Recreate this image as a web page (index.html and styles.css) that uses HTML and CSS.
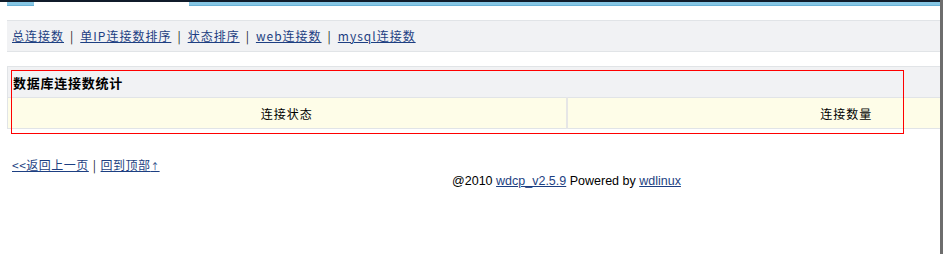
FILE: index.html
```html
<!DOCTYPE html>
<html lang="zh-CN">
<head>
  <meta charset="UTF-8" />
  <title>数据库连接数统计</title>
  <link rel="stylesheet" href="styles.css">
</head>
<body>
  <div class="page">
    <div class="topbar">
      <span class="tab tab-left"></span>
      <span class="tab-gap"></span>
      <span class="tab tab-right"></span>
    </div>

    <div class="inner">
      <div class="nav">
        <a href="#">总连接数</a><span class="sep">|</span><a href="#">单IP连接数排序</a><span class="sep">|</span><a href="#">状态排序</a><span class="sep">|</span><a href="#">web连接数</a><span class="sep">|</span><a href="#">mysql连接数</a>
      </div>

      <div class="stats">
        <table class="list">
          <tr class="title">
            <th colspan="2">数据库连接数统计</th>
          </tr>
          <tr class="row">
            <td>连接状态</td>
            <td>连接数量</td>
          </tr>
        </table>
        <div class="mark"></div>
      </div>

      <div class="back">
        <a href="#">&lt;&lt;返回上一页</a><span class="sep">|</span><a href="#">回到顶部<small>↑</small></a>
      </div>
      <div class="copy">
        @2010 <a href="#">wdcp_v2.5.9</a> Powered by <a href="#">wdlinux</a>
      </div>
    </div>
  </div>
  <div class="edge"></div>
</body>
</html>
```

FILE: styles.css
```css
html, body {
  height: 100%;
}
body {
  margin: 0;
  display: flex;
  background: #fff;
  color: #000;
  font-family: "Noto Sans CJK SC", "DejaVu Sans", sans-serif;
  font-size: 12px;
  letter-spacing: 1px;
  overflow: hidden;
}
a {
  color: #1d3f82;
  text-decoration: underline;
}
.page {
  width: 940px;
  overflow: hidden;
}
.edge {
  width: 3px;
  background: #6d6d6d;
}
.topbar {
  display: flex;
  height: 6px;
  border-top: 2px solid #101b2a;
  box-sizing: border-box;
}
.tab {
  height: 4px;
  background: #86c6e4;
  border-bottom: 1px solid #6ab2d6;
  box-sizing: border-box;
}
.tab-left {
  margin-left: 7px;
  width: 27px;
}
.tab-gap {
  width: 155px;
}
.tab-right {
  flex: 1;
}
.inner {
  width: 1119px;
  margin-left: 7px;
}
.nav {
  margin-top: 14px;
  height: 30px;
  line-height: 30px;
  padding-left: 5px;
  background: #f1f2f4;
  border-top: 1px solid #e1e4e7;
  border-bottom: 1px solid #e1e4e7;
}
.sep {
  color: #222;
  margin: 0 6px;
}
.stats {
  position: relative;
  margin-top: 14px;
}
.list {
  width: 100%;
  border-collapse: collapse;
  border: 1px solid #e1e4e7;
}
.list th {
  height: 30px;
  padding: 0 0 0 5px;
  text-align: left;
  font-size: 13px;
  font-weight: bold;
  letter-spacing: 0.75px;
  background: #f1f2f4;
  border-bottom: 1px solid #e1e4e7;
}
.list td {
  width: 50%;
  height: 30px;
  padding: 0;
  text-align: center;
  background: #fefde8;
}
.list td + td {
  border-left: 2px solid #e6e6e6;
}
.mark {
  position: absolute;
  left: 4px;
  top: 4px;
  width: 891px;
  height: 62px;
  border: 1px solid #ff0000;
}
.back {
  margin-top: 28px;
  padding-left: 5px;
  line-height: 16px;
  letter-spacing: 0.5px;
}
.back .sep {
  margin: 0 4px;
}
.back small {
  font-size: 9px;
  letter-spacing: 0;
}
.copy {
  text-align: center;
  line-height: 12px;
  letter-spacing: 0;
  font-size: 12.5px;
  font-family: "Liberation Sans", "Noto Sans CJK SC", sans-serif;
}
```
